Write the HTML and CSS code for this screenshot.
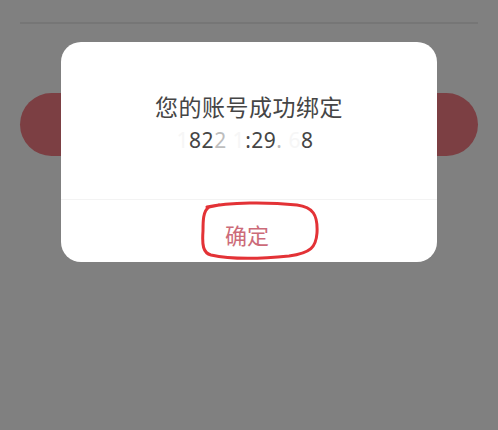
FILE: index.html
```html
<!DOCTYPE html>
<html lang="zh">
<head>
<meta charset="utf-8">
<link rel="stylesheet" href="styles.css">
</head>
<body>
<div class="page">
  <div class="rule"></div>
  <div class="pill"></div>
</div>
<div class="overlay">
  <div class="dialog">
    <div class="body">
      <div class="title">您的账号成功绑定</div>
      <div class="num"><span class="gone">1</span>82<span class="half">2</span> <span class="gone">1</span>:29<span class="half">.</span> <span class="gone">6</span>8</div>
    </div>
    <div class="foot">
      <span class="ok">确定</span>
      <svg class="mark" width="124" height="60" viewBox="0 0 124 60">
        <path d="M8 6 C30 1 70 1 98 4 C114 6 119 14 118 32 C117 46 112 52 90 55 C60 58 30 58 12 54 C4 52 3 44 4 30 C4 20 4 10 10 6 L20 4" fill="none" stroke="#e33236" stroke-width="3" stroke-linecap="round"/>
      </svg>
    </div>
  </div>
</div>
</body>
</html>
```

FILE: styles.css
```css
html, body {
  margin: 0;
  padding: 0;
}
body {
  width: 498px;
  height: 430px;
  background: #808080;
  font-family: "Noto Sans CJK SC", "Noto Sans", sans-serif;
  position: relative;
  overflow: hidden;
}
.page {
  padding: 22px 20px 0 20px;
}
.rule {
  height: 2px;
  background: #767676;
}
.pill {
  margin-top: 69px;
  height: 63px;
  border-radius: 32px;
  background: #7c3f43;
}
.overlay {
  position: absolute;
  left: 0;
  top: 0;
  width: 498px;
  height: 430px;
}
.dialog {
  position: absolute;
  left: 61px;
  top: 42px;
  width: 376px;
  height: 220px;
  background: #ffffff;
  border-radius: 20px;
  display: flex;
  flex-direction: column;
}
.body {
  height: 158px;
  border-bottom: 1px solid #f3f3f3;
  display: flex;
  flex-direction: column;
  align-items: center;
  padding-top: 48px;
  box-sizing: border-box;
}
.title {
  font-size: 23px;
  line-height: 32px;
  color: #454545;
  letter-spacing: 0.5px;
}
.num {
  font-family: "Noto Sans", sans-serif;
  font-size: 21px;
  line-height: 30px;
  color: #454545;
  letter-spacing: 0.5px;
  margin-top: 3px;
  margin-right: 8px;
}
.gone { color: #f6f6f6; }
.half { color: #bdbdbd; }
.foot {
  flex: 1;
  position: relative;
  display: flex;
  align-items: center;
  justify-content: center;
}
.ok {
  font-size: 22px;
  color: #cc6b79;
  margin-top: 5px;
  margin-right: 4px;
}
.mark {
  position: absolute;
  left: 138px;
  top: 1px;
}
```
